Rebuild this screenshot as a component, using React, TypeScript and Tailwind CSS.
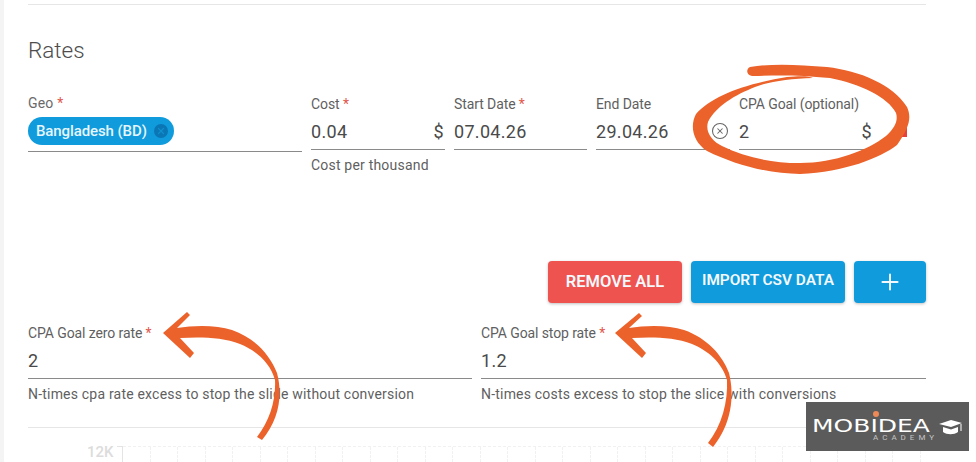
import { CircleX, Plus, X } from 'lucide-react';

const font = { fontFamily: 'Roboto, sans-serif' };

function Req() {
  return <span className="text-[#e2574c]"> *</span>;
}

function Field({
  label,
  value,
  required,
  suffix,
  helper,
  className,
}: {
  label: string;
  value: string;
  required?: boolean;
  suffix?: React.ReactNode;
  helper?: string;
  className: string;
}) {
  return (
    <div className={className}>
      <div className="h-[20px] text-[14px] leading-[20px] tracking-[-0.1px] whitespace-nowrap text-[#5f5f5f]">
        {label}
        {required && <Req />}
      </div>
      <div className="mt-[6px] flex h-[30px] items-center justify-between border-b border-[#8a8a8a] pb-[7px] text-[18px] tracking-[0.3px] text-[#4a4a4a]">
        <span>{value}</span>
        {suffix}
      </div>
      {helper && (
        <div className="mt-[5px] text-[14px] leading-[20px] tracking-[0.2px] whitespace-nowrap text-[#5f5f5f]">{helper}</div>
      )}
    </div>
  );
}

function Annotations() {
  return (
    <svg className="absolute top-0 left-0" width="976" height="462" viewBox="0 0 976 462">
      <g fill="#ec622b">
        <path d="M750,67 C775,63 800,65 827,67 C860,71 892,84 907,107 C912,118 909,128 897,145 C880,158 845,172 800,174 C770,174 735,165 707,151 C692,141 690,125 696,114 C712,96 745,84 787,77 C800,76 808,76 813,78 C790,79 770,81 755,87 C735,95 716,106 708,122 C705,132 712,141 722,146 C745,157 770,163 800,163 C835,163 868,150 886,136 C896,127 898,120 896,113 C888,97 860,84 830,78 C800,75 780,75 752,76 C746,75 746,69 750,67 Z" />
        <path d="M163,333 L187,312 L190,315 L177,328 C195,325 217,325 232,330 C255,338 270,355 277,373 C283,395 279,420 262,440 L257,437 C270,420 276,400 275,380 C270,362 255,350 240,344 C222,337 200,337 180,338 L194,353 L190,358 Z" />
        <path d="M615,333 L639,313 L642,316 L629,328 C647,325 669,325 684,330 C707,338 722,355 729,373 C735,397 731,425 713,447 L708,443 C722,425 728,402 727,380 C722,362 707,350 692,344 C674,337 652,337 632,338 L646,353 L642,358 Z" />
      </g>
    </svg>
  );
}

function Logo() {
  return (
    <div className="absolute top-[402px] left-[806px] h-[49px] w-[163px] overflow-hidden bg-[#5b5b5b] text-white">
      <div className="absolute top-[9px] left-[67px] size-[6px] rounded-full bg-[#ee8a58]" />
      <div
        className="absolute top-[17px] left-[6px] origin-left scale-x-[1.47] text-[17px] leading-[14px]"
        style={{ fontFamily: '"DejaVu Sans", sans-serif' }}
      >
        MOBIDEA
      </div>
      <div className="absolute top-[31px] left-[67px] text-[8px] leading-[10px] tracking-[4px] text-[#c4c4c4]">ACADEMY</div>
      <svg className="absolute top-[18px] left-[133px]" width="24" height="15" viewBox="0 0 24 15" fill="#fff">
        <path d="M0,4 L12,0 L23,3 L12,7 Z" />
        <path d="M4,7 L12,9.5 L19,7 L19,12 C15,15 8,15 4,12 Z" />
        <rect x="21.5" y="4" width="1" height="7" />
      </svg>
    </div>
  );
}

function ChartStub() {
  return (
    <div className="flex h-[34px] pl-[59px]">
      <div className="mt-[15px] w-[30px] shrink-0 text-[15px] leading-[18px] font-medium text-[#dcdcdc]">12K</div>
      <div className="mt-[18px] h-[16px] w-[6px] shrink-0 border-t border-r border-[#e4e4e4]" />
      <div className="mt-[18px] flex flex-1 border-t border-dashed border-[#f1f1f1]">
        {Array.from({ length: 29 }, (_, i) => (
          <div key={i} className="ml-[26.5px] h-full w-px shrink-0 border-l border-dashed border-[#f1f1f1]" />
        ))}
      </div>
    </div>
  );
}

export default function App() {
  return (
    <div className="relative flex h-[462px] w-[976px] overflow-hidden bg-white" style={font}>
      <div className="h-full w-[4px] bg-[#f4f4f4]" />
      <div className="ml-[24px] w-[898px]">
        <div className="mt-[4px] h-px bg-[#e6e6e6]" />
        <h2 className="mt-[32px] text-[22.5px] leading-[26px] font-light text-[#4d4d4d]">Rates</h2>

        {/* Rate row */}
        <div className="mt-[30px] flex items-start">
          <div className="w-[274px]">
            <div className="h-[20px] text-[14px] leading-[20px] tracking-[0.2px] text-[#6a6a6a]">
              Geo <Req />
            </div>
            <div className="mt-[4px] h-[35px] border-b border-[#8a8a8a]">
              <div className="flex h-[28px] w-[146px] items-center justify-between rounded-full bg-[#0f9bdc] pr-[6px] pl-[8px] text-[15px] font-medium tracking-[-0.1px] text-[#e6f6fd]">
                <span>Bangladesh (BD)</span>
                <span className="flex size-[14px] items-center justify-center rounded-full bg-[#0b76b4] text-[#0f8fcc]">
                  <X size={10} strokeWidth={3} />
                </span>
              </div>
            </div>
          </div>
          <Field
            className="mt-[1px] ml-[9px] w-[134px]"
            label="Cost"
            required
            value="0.04"
            suffix={<span className="mr-[1px] text-[18px]">$</span>}
            helper="Cost per thousand"
          />
          <Field className="mt-[1px] ml-[9px] w-[133px]" label="Start Date" required value="07.04.26" />
          <Field
            className="mt-[1px] ml-[9px] w-[134px]"
            label="End Date"
            value="29.04.26"
            suffix={<CircleX size={18} strokeWidth={1.4} className="mr-[1px] text-[#666666]" />}
          />
          <Field
            className="mt-[1px] ml-[9px] w-[133px]"
            label="CPA Goal (optional)"
            value="2"
            suffix={<span className="text-[18px]">$</span>}
          />
          <div className="mt-[31px] ml-[25px] h-[13px] w-[10px] bg-[#e8413a]" />
        </div>

        {/* Actions */}
        <div className="mt-[86px] flex justify-end gap-[9px] font-semibold text-[#f3f9fc]">
          <button className="h-[42px] w-[134px] rounded-[4px] bg-[#ef5350] text-[16.5px] shadow-[0_1px_3px_rgba(0,0,0,0.25)]">REMOVE ALL</button>
          <button className="h-[42px] w-[154px] rounded-[4px] bg-[#0f9bdc] pb-[3px] text-[15.4px] shadow-[0_1px_3px_rgba(0,0,0,0.25)]">IMPORT CSV DATA</button>
          <button className="flex h-[42px] w-[72px] items-center justify-center rounded-[4px] bg-[#0f9bdc] shadow-[0_1px_3px_rgba(0,0,0,0.25)]">
            <Plus size={26} strokeWidth={1.8} />
          </button>
        </div>

        {/* CPA rates */}
        <div className="mt-[20px] flex gap-[9px]">
          <Field
            className="w-[444px]"
            label="CPA Goal zero rate"
            required
            value="2"
            helper="N-times cpa rate excess to stop the slide without conversion"
          />
          <Field
            className="w-[445px]"
            label="CPA Goal stop rate"
            required
            value="1.2"
            helper="N-times costs excess to stop the slice with conversions"
          />
        </div>

        <div className="mt-[23px] h-px bg-[#e6e6e6]" />
        <ChartStub />
      </div>
      <Annotations />
      <Logo />
    </div>
  );
}
